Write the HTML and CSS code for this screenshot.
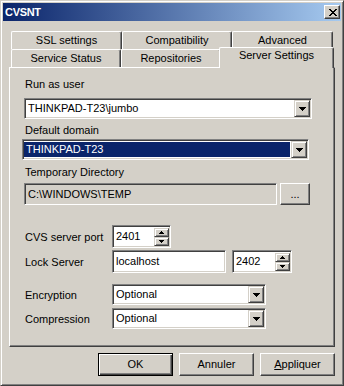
FILE: index.html
```html
<!DOCTYPE html>
<html>
<head>
<meta charset="utf-8">
<link rel="stylesheet" href="styles.css">
</head>
<body>
<div class="window">
  <div class="titlebar">
    <span class="title">CVSNT</span>
    <span class="close"><svg width="8" height="7" viewBox="0 0 8 7"><path d="M0 0h2v1H0zM6 0h2v1H6zM1 1h2v1H1zM5 1h2v1H5zM2 2h4v1H2zM3 3h2v1H3zM2 4h4v1H2zM1 5h2v1H1zM5 5h2v1H5zM0 6h2v1H0zM6 6h2v1H6z" fill="#000"/></svg></span>
  </div>
  <div class="body">
    <div class="tabs">
      <div class="tabrow">
        <div class="tab t-ssl">SSL settings</div>
        <div class="tab t-compat">Compatibility</div>
        <div class="tab t-adv">Advanced</div>
      </div>
      <div class="tabrow front">
        <div class="tab t-status">Service Status</div>
        <div class="tab t-repo">Repositories</div>
        <div class="tab sel">Server Settings</div>
      </div>
    </div>
    <div class="panel">
      <div class="lbl">Run as user</div>
      <div class="combo c-user">
        <div class="val">THINKPAD-T23\jumbo</div>
        <div class="dd"><svg width="7" height="4" viewBox="0 0 7 4"><path d="M0 0h7v1H0zM1 1h5v1H1zM2 2h3v1H2zM3 3h1v1H3z" fill="#000"/></svg></div>
      </div>
      <div class="lbl l-domain">Default domain</div>
      <div class="combo c-domain">
        <div class="val selval">THINKPAD-T23</div>
        <div class="dd"><svg width="7" height="4" viewBox="0 0 7 4"><path d="M0 0h7v1H0zM1 1h5v1H1zM2 2h3v1H2zM3 3h1v1H3z" fill="#000"/></svg></div>
      </div>
      <div class="lbl l-temp">Temporary Directory</div>
      <div class="row r-temp">
        <div class="edit ro e-temp">C:\WINDOWS\TEMP</div>
        <div class="btn b-browse">...</div>
      </div>
      <div class="row r-port">
        <div class="rlbl">CVS server port</div>
        <div class="spin s-port">
          <div class="num">2401</div>
          <div class="arrows">
            <div class="arr up"><svg width="5" height="3" viewBox="0 0 5 3"><path d="M2 0h1v1H2zM1 1h3v1H1zM0 2h5v1H0z" fill="#000"/></svg></div>
            <div class="arr dn"><svg width="5" height="3" viewBox="0 0 5 3"><path d="M0 0h5v1H0zM1 1h3v1H1zM2 2h1v1H2z" fill="#000"/></svg></div>
          </div>
        </div>
      </div>
      <div class="row r-lock">
        <div class="rlbl">Lock Server</div>
        <div class="edit e-lock">localhost</div>
        <div class="spin s-lock">
          <div class="num">2402</div>
          <div class="arrows">
            <div class="arr up"><svg width="5" height="3" viewBox="0 0 5 3"><path d="M2 0h1v1H2zM1 1h3v1H1zM0 2h5v1H0z" fill="#000"/></svg></div>
            <div class="arr dn"><svg width="5" height="3" viewBox="0 0 5 3"><path d="M0 0h5v1H0zM1 1h3v1H1zM2 2h1v1H2z" fill="#000"/></svg></div>
          </div>
        </div>
      </div>
      <div class="row r-enc">
        <div class="rlbl">Encryption</div>
        <div class="combo c-small">
          <div class="val">Optional</div>
          <div class="dd"><svg width="7" height="4" viewBox="0 0 7 4"><path d="M0 0h7v1H0zM1 1h5v1H1zM2 2h3v1H2zM3 3h1v1H3z" fill="#000"/></svg></div>
        </div>
      </div>
      <div class="row r-comp">
        <div class="rlbl">Compression</div>
        <div class="combo c-small">
          <div class="val">Optional</div>
          <div class="dd"><svg width="7" height="4" viewBox="0 0 7 4"><path d="M0 0h7v1H0zM1 1h5v1H1zM2 2h3v1H2zM3 3h1v1H3z" fill="#000"/></svg></div>
        </div>
      </div>
    </div>
    <div class="buttons">
      <div class="btn pb default">OK</div>
      <div class="btn pb">Annuler</div>
      <div class="btn pb"><u>A</u>ppliquer</div>
    </div>
  </div>
</div>
</body>
</html>
```
FILE: styles.css
```css
* { box-sizing: border-box; }
html, body { margin: 0; padding: 0; background: #d4d0c8; }
body {
  font-family: "Liberation Sans", Arial, sans-serif;
  font-size: 11px;
  color: #000;
}
.window {
  width: 344px;
  height: 386px;
  border: 1px solid;
  border-color: #d4d0c8 #404040 #404040 #d4d0c8;
  box-shadow: inset 1px 1px #fff, inset -1px -1px #808080;
  padding: 2px;
  background: #d4d0c8;
  display: flex;
  flex-direction: column;
}
.titlebar {
  height: 18px;
  background: linear-gradient(to right, #0a246a, #a6caf0);
  display: flex;
  align-items: center;
  justify-content: space-between;
  padding: 0 1px 0 2px;
}
.title {
  color: #fff;
  font-weight: bold;
  font-size: 11px;
  letter-spacing: -0.3px;
  line-height: 13px;
}
.close {
  width: 16px;
  height: 14px;
  background: #d4d0c8;
  border: 1px solid;
  border-color: #fff #404040 #404040 #fff;
  box-shadow: inset -1px -1px #808080;
  display: flex;
  align-items: center;
  justify-content: center;
  padding-left: 1px;
}
.close svg { display: block; }
.body {
  flex: 1;
  padding: 0 6px;
  display: flex;
  flex-direction: column;
}
.tabs { margin-top: 10px; }
.tabrow {
  display: flex;
  height: 18px;
  margin-left: 2px;
}
.tabrow.front { align-items: flex-end; }
.tab {
  height: 18px;
  border-top: 1px solid #fff;
  border-left: 1px solid #fff;
  border-right: 1px solid #404040;
  box-shadow: inset -1px 0 #808080;
  border-radius: 2px 2px 0 0;
  text-align: center;
  line-height: 16px;
  white-space: nowrap;
  background: #d4d0c8;
}
.t-ssl { width: 111px; }
.t-compat { width: 110px; }
.t-adv { width: 101px; }
.t-status { width: 110px; }
.t-repo { width: 100px; }
.tab.sel {
  width: 115px;
  height: 21px;
  margin-left: -2px;
  margin-bottom: -1px;
  position: relative;
  z-index: 1;
  line-height: 15px;
}
.panel {
  width: 326px;
  height: 280px;
  border: 1px solid;
  border-color: #fff #404040 #404040 #fff;
  box-shadow: inset -1px -1px #808080;
  padding: 10px 0 0 15px;
  display: flex;
  flex-direction: column;
}
.lbl { height: 13px; line-height: 13px; }
.combo {
  display: flex;
  height: 21px;
  border: 1px solid;
  border-color: #808080 #fff #fff #808080;
  box-shadow: inset 1px 1px #404040, inset -1px -1px #d4d0c8;
  background: #fff;
  padding: 1px;
}
.combo .val {
  flex: 1;
  line-height: 17px;
  padding-left: 2px;
  white-space: nowrap;
}
.combo .val.selval {
  margin: 1px 1px 1px 0;
  background: #0a246a;
  color: #fff;
  line-height: 15px;
  padding-left: 2px;
}
.dd {
  width: 16px;
  height: 17px;
  background: #d4d0c8;
  border: 1px solid;
  border-color: #d4d0c8 #404040 #404040 #d4d0c8;
  box-shadow: inset 1px 1px #fff, inset -1px -1px #808080;
  display: flex;
  align-items: center;
  justify-content: center;
}
.dd svg, .arr svg { display: block; }
.c-user { margin-top: 7px; margin-left: -1px; width: 288px; }
.l-domain { margin-top: 5px; }
.c-domain { margin-top: 2px; margin-left: -3px; width: 287px; }
.l-temp { margin-top: 6px; }
.row { display: flex; align-items: center; }
.r-temp { margin-top: 4px; margin-left: -1px; gap: 3px; }
.edit {
  height: 22px;
  border: 1px solid;
  border-color: #808080 #fff #fff #808080;
  box-shadow: inset 1px 1px #404040, inset -1px -1px #d4d0c8;
  background: #fff;
  line-height: 20px;
  padding-left: 3px;
  white-space: nowrap;
}
.edit.ro { background: #d4d0c8; }
.e-temp { width: 253px; }
.btn {
  background: #d4d0c8;
  border: 1px solid;
  border-color: #fff #404040 #404040 #fff;
  box-shadow: inset -1px -1px #808080;
  text-align: center;
}
.b-browse { width: 30px; height: 22px; line-height: 20px; }
.rlbl { width: 87px; }
.r-port { margin-top: 20px; }
.r-lock { margin-top: 2px; }
.spin {
  display: flex;
  height: 23px;
  border: 1px solid;
  border-color: #808080 #fff #fff #808080;
  box-shadow: inset 1px 1px #404040, inset -1px -1px #d4d0c8;
  background: #fff;
  padding: 2px 1px 1px 2px;
}
.spin .num { flex: 1; line-height: 17px; padding-left: 1px; }
.s-port { width: 59px; }
.s-lock { width: 60px; margin-left: 6px; }
.e-lock { width: 114px; height: 23px; line-height: 21px; }
.arrows { width: 15px; display: flex; flex-direction: column; }
.arr {
  flex: 1;
  background: #d4d0c8;
  border: 1px solid;
  border-color: #d4d0c8 #404040 #404040 #d4d0c8;
  box-shadow: inset 1px 1px #fff, inset -1px -1px #808080;
  display: flex;
  align-items: center;
  justify-content: center;
}
.r-enc { margin-top: 11px; }
.r-comp { margin-top: 3px; }
.c-small { width: 154px; }
.buttons {
  margin-top: 6px;
  width: 326px;
  display: flex;
  justify-content: flex-end;
  gap: 6px;
}
.pb { width: 75px; height: 23px; line-height: 21px; }
.pb.default {
  border: 1px solid #000;
  box-shadow: inset 1px 1px #fff, inset -1px -1px #404040, inset -2px -2px #808080;
}
```
